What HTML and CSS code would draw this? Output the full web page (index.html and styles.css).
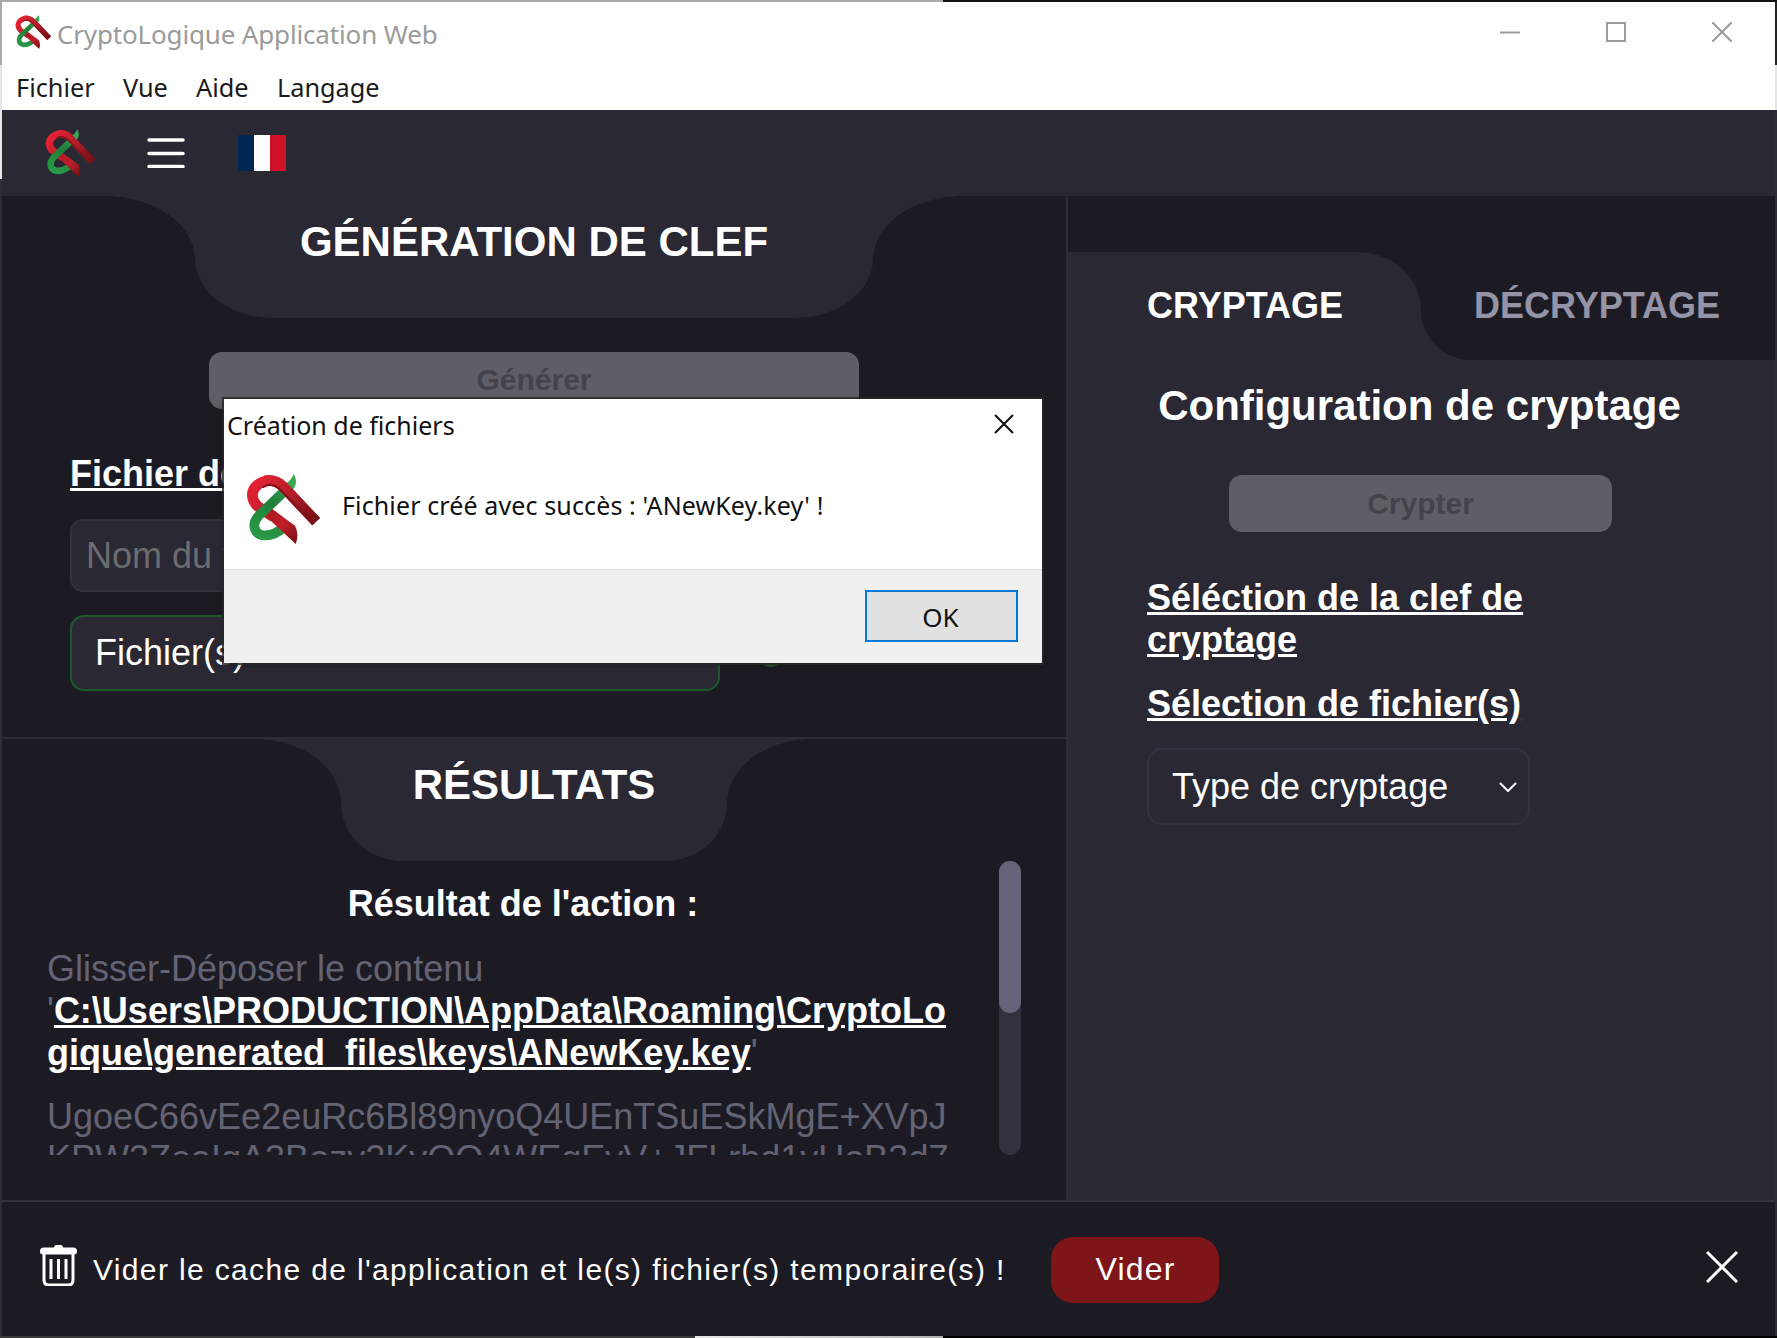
FILE: index.html
```html
<!DOCTYPE html>
<html lang="fr">
<head>
<meta charset="utf-8">
<title>CryptoLogique Application Web</title>
<link rel="stylesheet" href="styles.css">
</head>
<body>
<div class="window">
  <div class="edge-top"></div>
  <div class="titlebar">
    <div class="title-left">
      <svg class="logo logo-small" viewBox="10 12 76 76">
        <defs>
          <linearGradient id="redg" gradientUnits="userSpaceOnUse" x1="20" y1="22" x2="80" y2="70">
            <stop offset="0" stop-color="#e32235"/><stop offset=".45" stop-color="#b81d28"/><stop offset="1" stop-color="#6d0f14"/>
          </linearGradient>
          <linearGradient id="redl" gradientUnits="userSpaceOnUse" x1="31" y1="50" x2="62" y2="84">
            <stop offset="0" stop-color="#a8181f"/><stop offset=".5" stop-color="#c01f2a"/><stop offset="1" stop-color="#7a1015"/>
          </linearGradient>
          <linearGradient id="greeng" gradientUnits="userSpaceOnUse" x1="60" y1="14" x2="25" y2="80">
            <stop offset="0" stop-color="#3fb45a"/><stop offset=".5" stop-color="#1f7f39"/><stop offset="1" stop-color="#2a9a48"/>
          </linearGradient>
          <symbol id="logo-mark" viewBox="10 12 76 76">
            <path d="M82 63 L48 27 C39 18 27 20 20 27 C14 34 16 44 26 50 L38 58" fill="none" stroke="url(#redg)" stroke-width="11"/>
            <path d="M59 14 C63 21 62 28 55 33 L45 27 C52 24 57 20 59 14 Z" fill="#35a852"/>
            <path d="M51 30 L46 35 L24 56 C15 65 18 75 27 77 C34 78 42 75 50 68" fill="none" stroke="url(#greeng)" stroke-width="10"/>
            <path d="M37 50 L60 67 C64 74 63 81 61 86 L31 58 Z" fill="url(#redl)"/>
            <path d="M82 63 L48 27 C42 21 35 20 29 21" fill="none" stroke="url(#redg)" stroke-width="11"/>
            <path d="M80 65 L44 29 C38 24 32 24 27 28" fill="none" stroke="#7d1218" stroke-width="2"/>
          </symbol>
        </defs>
        <use href="#logo-mark" x="10" y="12" width="76" height="76"/>
      </svg>
      <span class="title-text">CryptoLogique Application Web</span>
    </div>
    <div class="win-controls">
      <svg class="win-icon" viewBox="0 0 20 20"><path d="M0 10.5H20" class="win-stroke"/></svg>
      <svg class="win-icon" viewBox="0 0 20 20"><rect x="1" y="1" width="18" height="18" class="win-stroke"/></svg>
      <svg class="win-icon" viewBox="0 0 20 20"><path d="M0 0L20 20M20 0L0 20" class="win-stroke"/></svg>
    </div>
  </div>
  <nav class="menubar">
    <span>Fichier</span><span>Vue</span><span>Aide</span><span>Langage</span>
  </nav>
  <header class="apphead">
    <svg class="logo logo-head" viewBox="10 12 76 76"><use href="#logo-mark" x="10" y="12" width="76" height="76"/></svg>
    <svg class="burger" viewBox="0 0 38 30"><path d="M2 2H36M2 15.500H36M2 28.500H36"/></svg>
    <div class="flag"><i class="flag-b"></i><i class="flag-w"></i><i class="flag-r"></i></div>
  </header>
  <main class="main">
    <section class="left">
      <div class="gen">
        <div class="hump hump-gen">
          <div class="flare flare-l"></div>
          <div class="hump-body"><h2>GÉNÉRATION DE CLEF</h2></div>
          <div class="flare flare-r"></div>
        </div>
        <button class="btn-disabled btn-gen">Générer</button>
        <div class="gen-form">
          <a class="ulabel">Fichier de clef</a>
          <div class="field">Nom du fichier</div>
          <div class="file-row">
            <div class="file-btn">Fichier(s)</div>
            <span class="dot"></span>
          </div>
        </div>
      </div>
      <div class="res">
        <div class="hump hump-res">
          <div class="flare flare-l"></div>
          <div class="hump-body"><h2>RÉSULTATS</h2></div>
          <div class="flare flare-r"></div>
        </div>
        <div class="scroller">
          <div class="scroll-content">
            <h3>Résultat de l'action :</h3>
            <p class="muted">Glisser-Déposer le contenu<br>'<a class="path">C:\Users\PRODUCTION\AppData\Roaming\CryptoLogique\generated_files\keys\ANewKey.key</a>'</p>
            <p class="muted key">UgoeC66vEe2euRc6Bl89nyoQ4UEnTSuESkMgE+XVpJKPW3ZeaIgA3Bozv2KvOO4WEgEvV+JFLrbd1vUoB3d7</p>
          </div>
          <div class="scrollbar"><div class="thumb"></div></div>
        </div>
      </div>
    </section>
    <section class="right">
      <div class="tabs-strip"></div>
      <div class="tabs">
        <div class="tab-cell tab-cell-a"><div class="tab tab-a">CRYPTAGE</div></div>
        <div class="tab-cell tab-cell-b"><div class="tab tab-b">DÉCRYPTAGE</div></div>
      </div>
      <h2 class="conf-title">Configuration de cryptage</h2>
      <button class="btn-disabled btn-crypt">Crypter</button>
      <div class="conf-form">
        <a class="ulabel">Séléction de la clef de cryptage</a>
        <a class="ulabel second">Sélection de fichier(s)</a>
        <div class="select">
          <span>Type de cryptage</span>
          <svg class="chevron" viewBox="0 0 18 10"><path d="M1 1L9 9L17 1"/></svg>
        </div>
      </div>
    </section>
  </main>
  <footer class="bottom">
    <svg class="trash" viewBox="0 0 37 42">
      <path class="trash-lid" d="M14 3.500Q14 1 16 1H21Q23 1 23 3.500H33Q37 3.500 37 7V8Q37 10.500 33 10.500H4Q0 10.500 0 8V7Q0 3.500 4 3.500Z"/>
      <path class="trash-body" d="M4 10V36Q4 41 9 41H28Q33 41 33 36V10"/>
      <path class="trash-bars" d="M11 15V35M18.500 15V35M26 15V35"/>
    </svg>
    <span class="bottom-text">Vider le cache de l'application et le(s) fichier(s) temporaire(s) !</span>
    <button class="btn-vider">Vider</button>
    <svg class="bottom-close" viewBox="0 0 32 32"><path d="M1 1L31 31M31 1L1 31"/></svg>
  </footer>
  <div class="edge-bottom"></div>

  <div class="dialog">
    <div class="dlg-body">
      <div class="dlg-title"><span>Création de fichiers</span>
        <svg class="dlg-x" viewBox="0 0 20 20"><path d="M1 1L19 19M19 1L1 19"/></svg>
      </div>
      <div class="dlg-msg">
        <svg class="logo logo-dlg" viewBox="10 12 76 76"><use href="#logo-mark" x="10" y="12" width="76" height="76"/></svg>
        <span class="dlg-text">Fichier créé avec succès : 'ANewKey.key' !</span>
      </div>
    </div>
    <div class="dlg-foot"><button class="dlg-ok">OK</button></div>
  </div>
</div>
</body>
</html>
```

FILE: styles.css
```css
* { box-sizing: border-box; }
html, body { margin: 0; padding: 0; background: #111; }
body { font-family: "Liberation Sans", Arial, sans-serif; }
h2, h3, p { margin: 0; }
button { font-family: inherit; border: 0; padding: 0; }

.window {
  position: relative;
  width: 1777px;
  height: 1338px;
  overflow: hidden;
  display: flex;
  flex-direction: column;
  padding: 0 2px;
  background:
    linear-gradient(180deg, #a9a9a9 0, #a9a9a9 65px, #e6e6e6 65px, #e6e6e6 179px, #2e2d36 179px) left top / 2px 100% no-repeat,
    linear-gradient(180deg, #222 0, #222 65px, #e6e6e6 65px, #e6e6e6 110px, #2e2d36 110px) right top / 2px 100% no-repeat;
  color: #fff;
}
.edge-top {
  height: 2px;
  margin: 0 -2px;
  flex: none;
  background: linear-gradient(90deg, #ababab 943px, #111 943px);
}
.edge-bottom {
  height: 2px;
  margin: 0 -2px;
  flex: none;
  background: linear-gradient(90deg, #3a3a3a 695px, #e6e6e6 695px, #b0b0b0 943px, #000 943px);
}

/* title bar */
.titlebar {
  height: 60px;
  flex: none;
  background: #fff;
  display: flex;
  justify-content: space-between;
  padding-left: 13px;
}
.title-left { display: flex; align-items: center; gap: 6px; }
.logo { display: block; flex: none; }
.logo-small { width: 36px; height: 36px; }
.title-text {
  font-family: "Noto Sans", sans-serif;
  font-size: 26px;
  letter-spacing: -.16px;
  color: #9b9b9b;
  padding-top: 4px;
}
.win-controls {
  display: flex;
  gap: 86px;
  padding: 20px 43px 0 0;
}
.win-icon { width: 20px; height: 20px; display: block; }
.win-stroke { fill: none; stroke: #9b9b9b; stroke-width: 2; }

.menubar {
  height: 48px;
  flex: none;
  background: #fff;
  display: flex;
  align-items: center;
  gap: 28.300px;
  padding: 2px 0 0 14px;
  font-family: "Noto Sans", sans-serif;
  font-size: 25.300px;
  color: #1a1a1a;
}

/* app header */
.apphead {
  height: 86px;
  flex: none;
  background: #2a2833;
  display: flex;
  align-items: center;
  padding-left: 43px;
}
.logo-head { width: 50px; height: 50px; }
.burger { width: 38px; height: 30px; margin-left: 52px; display: block; }
.burger path { fill: none; stroke: #fff; stroke-width: 3.500; stroke-linecap: round; }
.flag { display: flex; width: 48px; height: 36px; margin-left: 53px; }
.flag i { flex: 1; display: block; }
.flag-b { background: #002654; }
.flag-w { background: #fff; }
.flag-r { background: #ce1126; }

/* main */
.main {
  height: 1004px;
  flex: none;
  display: grid;
  grid-template-columns: 1064px 707px;
  column-gap: 2px;
  background: #2e2d36;
}
.left { background: #1c1b24; display: flex; flex-direction: column; overflow: hidden; }
.right { background: #2a2833; display: flex; flex-direction: column; align-items: center; }

.gen { height: 543px; flex: none; border-bottom: 2px solid #2e2d37; display: flex; flex-direction: column; }
.hump { display: flex; justify-content: center; flex: none; height: 122px; }
.hump-body {
  background: #2a2833;
  text-align: center;
  height: 100%;
}
.hump h2 { font-size: 42px; line-height: 48px; font-weight: 700; }
.flare { background-repeat: no-repeat; }
.hump-gen .hump-body { width: 678px; padding-top: 22px; border-radius: 0 0 78px 78px / 0 0 59px 59px; }
.hump-gen .flare { width: 90px; height: 63px; }
.hump-gen .flare-l { background-image: radial-gradient(90px 63px at 0 100%, #1c1b24 99.500%, #2a2833 100%); }
.hump-gen .flare-r { background-image: radial-gradient(90px 63px at 100% 100%, #1c1b24 99.500%, #2a2833 100%); }
.hump-res .hump-body { width: 386px; padding-top: 22px; border-radius: 0 0 62px 62px / 0 0 58px 58px; }
.hump-res .flare { width: 85px; height: 64px; }
.hump-res .flare-l { background-image: radial-gradient(85px 64px at 0 100%, #1c1b24 99.500%, #2a2833 100%); }
.hump-res .flare-r { background-image: radial-gradient(85px 64px at 100% 100%, #1c1b24 99.500%, #2a2833 100%); }

.btn-disabled {
  display: block;
  background: #5f5e67;
  color: #44434c;
  font-size: 30px;
  font-weight: 700;
  border-radius: 13px;
  text-align: center;
}
.btn-gen { width: 650px; height: 57px; margin: 34px auto 0; flex: none; padding-bottom: 2px; }
.gen-form { padding: 44px 68px 0; }
.ulabel {
  display: block;
  font-size: 36px;
  line-height: 42px;
  font-weight: 700;
  text-decoration: underline;
  color: #fff;
}
.field {
  margin-top: 24px;
  height: 73px;
  background: #2a2833;
  border: 2px solid #33323c;
  border-radius: 13px;
  padding: 0 14px;
  display: flex;
  align-items: center;
  font-size: 36px;
  color: #6c6c70;
}
.file-row { display: flex; align-items: center; gap: 37px; margin-top: 23px; }
.file-btn {
  width: 650px;
  height: 76px;
  background: #2a2833;
  border: 2px solid #1c5a2b;
  border-radius: 14px;
  padding: 0 23px;
  display: flex;
  align-items: center;
  font-size: 36px;
}
.dot { width: 28px; height: 28px; border: 3px solid #1c5a2b; border-radius: 50%; background: #4a2a2a; }

.res { flex: 1; display: flex; flex-direction: column; min-height: 0; }
.scroller { height: 294px; flex: none; display: flex; padding-left: 45px; }
.scroll-content { width: 952px; flex: none; overflow: hidden; padding-top: 22px; }
.scroll-content h3 { font-size: 36px; line-height: 41px; font-weight: 700; text-align: center; }
.muted {
  width: 902px;
  margin-top: 22px;
  font-size: 36px;
  line-height: 42px;
  color: #646373;
  word-break: break-all;
}
.scroll-content h3 + .muted { margin-top: 24px; }
.path { font-weight: 700; color: #fff; text-decoration: underline; }
.scrollbar { width: 22px; height: 100%; flex: none; background: #33313d; border-radius: 11px; }
.thumb { height: 152px; background: #66647a; border-radius: 11px; }

/* right */
.tabs-strip { height: 56px; width: 100%; flex: none; background: #1c1b24; }
.tabs { height: 108px; width: 100%; display: flex; flex: none; }
.tab-cell { height: 100%; }
.tab-cell-a { width: 353px; background: #1c1b24; }
.tab-cell-b { flex: 1; background: #2a2833; }
.tab {
  height: 100%;
  display: flex;
  align-items: center;
  font-size: 36px;
  font-weight: 700;
}
.tab-a {
  background: #2a2833;
  padding-left: 79px;
  border-top-right-radius: 64px 58px;
}
.tab-b {
  background: #1c1b24;
  color: #9593a6;
  padding-left: 53px;
  border-bottom-left-radius: 50px;
}
.conf-title { margin: 22px 4px 0 0; font-size: 42px; line-height: 48px; font-weight: 700; }
.btn-crypt { width: 383px; height: 57px; margin: 45px 2px 0 0; flex: none; }
.conf-form { width: 383px; padding-top: 45px; align-self: flex-start; margin-left: 79px; }
.ulabel.second { margin-top: 22px; }
.select {
  margin-top: 23px;
  height: 77px;
  border: 2px solid #33323e;
  border-radius: 15px;
  display: flex;
  align-items: center;
  justify-content: space-between;
  padding: 0 11px 0 23px;
  font-size: 36px;
}
.chevron { width: 18px; height: 10px; display: block; }
.chevron path { fill: none; stroke: #fff; stroke-width: 2; }

/* bottom */
.bottom {
  height: 136px;
  flex: none;
  border-top: 2px solid #33313d;
  background: #1c1b24;
  display: flex;
  align-items: center;
  padding-left: 38px;
}
.trash { width: 37px; height: 42px; display: block; flex: none; margin-top: -8px; }
.trash-lid { fill: #fff; }
.trash-body { fill: none; stroke: #fff; stroke-width: 3; }
.trash-bars { fill: none; stroke: #fff; stroke-width: 3; }
.bottom-text { margin: 2px 0 0 16px; font-size: 30px; letter-spacing: 1.350px; white-space: nowrap; }
.btn-vider {
  margin: 2px 0 0 45px;
  width: 168px;
  height: 66px;
  padding-bottom: 2px;
  border-radius: 22px;
  background: #7e1519;
  color: #fff;
  font-size: 32px;
  letter-spacing: 1.200px;
  text-indent: 2px;
  flex: none;
}
.bottom-close { width: 32px; height: 32px; margin: -4px 37px 0 auto; display: block; }
.bottom-close path { fill: none; stroke: #fff; stroke-width: 3; }

/* dialog */
.dialog {
  position: absolute;
  left: 224px;
  top: 399px;
  width: 818px;
  height: 264px;
  background: #f0f0f0;
  box-shadow: 0 0 0 2px rgba(40, 40, 40, .8), 0 2px 6px rgba(0, 0, 0, .35);
  color: #111;
  font-family: "Noto Sans", sans-serif;
  display: flex;
  flex-direction: column;
}
.dlg-body { height: 171px; flex: none; background: #fff; border-bottom: 1px solid #dfdfdf; }
.dlg-title {
  display: flex;
  justify-content: space-between;
  align-items: center;
  height: 52px;
  padding: 0 28px 0 3px;
  font-size: 25px;
}
.dlg-x { width: 20px; height: 20px; display: block; margin-top: -2px; }
.dlg-x path { fill: none; stroke: #111; stroke-width: 2; }
.dlg-msg { display: flex; align-items: center; padding-left: 22px; font-size: 25px; letter-spacing: .12px; margin-top: 21px; }
.dlg-text { margin-top: -9px; }
.logo-dlg { width: 74px; height: 74px; margin-right: 22px; }
.dlg-foot { flex: 1; display: flex; justify-content: flex-end; padding: 20px 24px 0 0; }
.dlg-ok {
  width: 153px;
  height: 52px;
  background: #e1e1e1;
  border: 2px solid #0078d7;
  font-family: "Noto Sans", sans-serif;
  font-size: 26px;
  color: #111;
  padding-top: 2px;
  padding-right: 2px;
}
```
